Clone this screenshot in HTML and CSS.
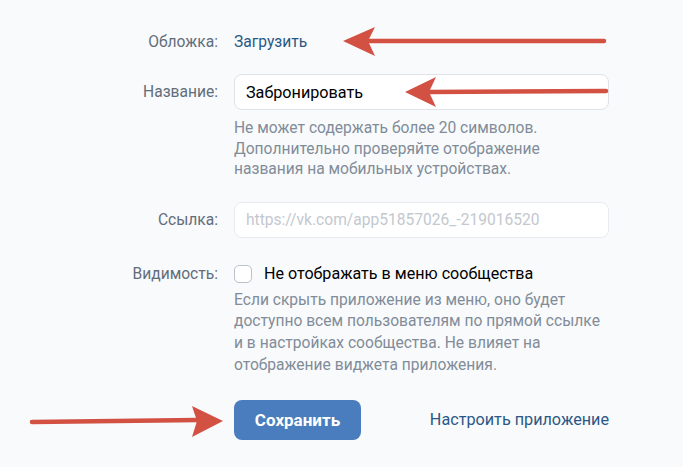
FILE: index.html
```html
<!DOCTYPE html>
<html lang="ru">
  <head>
    <meta charset="UTF-8" />
    <meta name="viewport" content="width=device-width, initial-scale=1.0" />
    <title>Настройки приложения</title>
    <link rel="stylesheet" href="styles.css">
  </head>
  <body>
    <div class="form">
      <div class="row row-cover">
        <div class="label">Обложка:</div>
        <div class="field"><a class="link" href="#">Загрузить</a></div>
      </div>

      <div class="row row-name">
        <div class="label">Название:</div>
        <div class="field">
          <input class="input" type="text" value="Забронировать" />
          <p class="hint hint-name">
            Не может содержать более 20 символов.<br />
            Дополнительно проверяйте отображение<br />
            названия на мобильных устройствах.
          </p>
        </div>
      </div>

      <div class="row row-url">
        <div class="label">Ссылка:</div>
        <div class="field">
          <input class="input input-muted" type="text" placeholder="https://vk.com/app51857026_-219016520" readonly />
        </div>
      </div>

      <div class="row row-visible">
        <div class="label">Видимость:</div>
        <div class="field">
          <label class="check">
            <span class="box"></span>
            <span>Не отображать в меню сообщества</span>
          </label>
          <p class="hint hint-visible">
            Если скрыть приложение из меню, оно будет<br />
            доступно всем пользователям по прямой ссылке<br />
            и в настройках сообщества. Не влияет на<br />
            отображение виджета приложения.
          </p>
        </div>
      </div>

      <div class="row row-actions">
        <div class="label"></div>
        <div class="field actions">
          <button class="btn">Сохранить</button>
          <a class="link link-big" href="#">Настроить приложение</a>
        </div>
      </div>
    </div>

    <!-- red pointers drawn over the form -->
    <svg class="arrows" width="683" height="467" viewBox="0 0 683 467">
      <g stroke="#d25143" stroke-width="4.5" stroke-linecap="round" fill="none">
        <line x1="368" y1="41" x2="604" y2="41" />
        <line x1="430" y1="92" x2="606" y2="91" />
        <line x1="32" y1="422" x2="198" y2="420" />
      </g>
      <g fill="#d25143">
        <polygon points="343,41 375,27 368,41 375,56" />
        <polygon points="405,92 436,77 429,92 436,107" />
        <polygon points="223,421 192,406 197,421 192,437" />
      </g>
    </svg>
  </body>
</html>
```

FILE: styles.css
```css
* {
  box-sizing: border-box;
  margin: 0;
  padding: 0;
}
body {
  font-family: Roboto, "Noto Sans", sans-serif;
  font-size: 15.6px;
  background-color: #f9fafc;
  color: #000;
  width: 683px;
  height: 467px;
  overflow: hidden;
}
.form {
  padding-top: 24px;
}
.row {
  display: grid;
  grid-template-columns: 218px 375px;
  column-gap: 16px;
}
.label {
  text-align: right;
  color: #626d7a;
  line-height: 36px;
}
.field {
  min-width: 0;
}
.link {
  color: #2a5885;
  text-decoration: none;
  line-height: 36px;
}
.link-big {
  font-size: 16.2px;
}
.row-name {
  margin-top: 14px;
}
.row-url {
  margin-top: 22px;
}
.row-visible {
  margin-top: 26px;
}
.row-visible .label {
  line-height: 20px;
}
.row-actions {
  margin-top: 23px;
}
.input {
  display: block;
  width: 100%;
  height: 36px;
  padding: 0 11px;
  border: 1px solid #dfe2e6;
  border-radius: 8px;
  background: #fff;
  font-family: inherit;
  font-size: 16.2px;
  color: #000;
  outline: none;
}
.input::placeholder {
  color: #c3c8cf;
}
.input-muted {
  font-size: 15.6px;
  border-color: #e9ebee;
}
.hint {
  color: #818c99;
}
.hint-name {
  margin-top: 8px;
  line-height: 20.5px;
}
.hint-visible {
  margin-top: 6px;
  line-height: 21.8px;
}
.check {
  display: flex;
  align-items: center;
  gap: 12px;
  font-size: 16.1px;
  line-height: 20px;
  cursor: pointer;
}
.box {
  flex: none;
  width: 18px;
  height: 18px;
  border: 1.5px solid #b8c1cc;
  border-radius: 5px;
  background: #fff;
}
.actions {
  display: flex;
  align-items: center;
  justify-content: space-between;
}
.btn {
  width: 127px;
  height: 40px;
  border: none;
  border-radius: 8px;
  background: #4a7dbd;
  color: #fff;
  font-family: inherit;
  font-size: 17px;
  font-weight: 700;
  cursor: pointer;
}
.btn:hover {
  background: #4374b0;
}
.arrows {
  position: absolute;
  left: 0;
  top: 0;
  pointer-events: none;
}
```
